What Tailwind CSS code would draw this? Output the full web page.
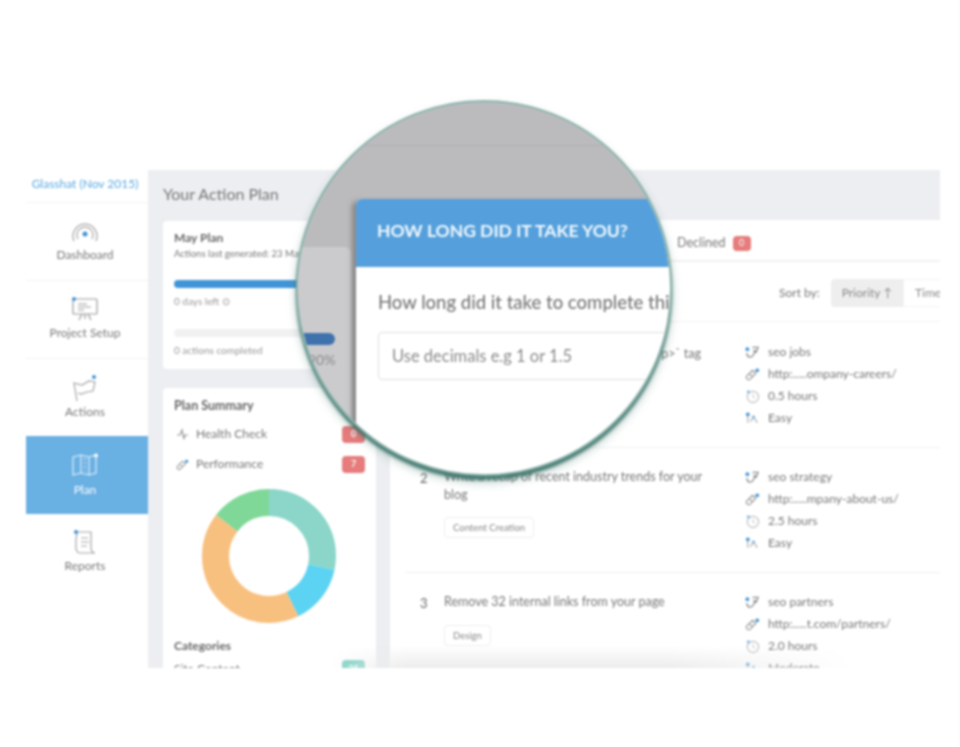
<!DOCTYPE html>
<html lang="en">

<head>
    <meta charset="UTF-8">
    <meta name="viewport" content="width=device-width, initial-scale=1.0">
    <title>Your Action Plan</title>
    <script src="https://cdn.jsdelivr.net/npm/@tailwindcss/browser@4"></script>
</head>

<body class="bg-white font-['Lato','Liberation_Sans',sans-serif]">

    <!-- shared icons for the task rows -->
    <svg width="0" height="0" class="absolute">
        <symbol id="i-key" viewBox="0 0 16 16">
            <path d="M2 9c0 5 5 6 7 2l2-5M8 3h6l-2 5-3-2" fill="none" stroke="#8f8f8f" stroke-width="1.4" />
            <circle cx="2.500" cy="5" r="2" fill="#3f93d6" />
        </symbol>
        <symbol id="i-link" viewBox="0 0 16 16">
            <path d="M2 10l6-6 3.500 3.500-6 6a2.500 2.500 0 0 1-3.500-3.500zM5 8l3 3" fill="none" stroke="#9a9a9a" stroke-width="1.3" />
            <circle cx="13" cy="4" r="2" fill="#3f93d6" />
        </symbol>
        <symbol id="i-clock" viewBox="0 0 16 16">
            <circle cx="8.500" cy="9" r="6" fill="none" stroke="#bdbdbd" stroke-width="1.2" />
            <path d="M8.500 6v3l2 1.500" fill="none" stroke="#bdbdbd" stroke-width="1" />
            <circle cx="3.500" cy="3.500" r="1.500" fill="#6db1e3" />
        </symbol>
        <symbol id="i-level" viewBox="0 0 16 16">
            <path d="M3 13V4M6 12l3-6 4 7" fill="none" stroke="#a9a9a9" stroke-width="1.2" />
            <circle cx="3" cy="4" r="2" fill="#3f93d6" />
            <circle cx="9" cy="7" r="1.500" fill="#6db1e3" />
        </symbol>
    </svg>

    <div class="relative w-[959px] h-[747px] pt-[170px] pl-[26px] border-r border-[#f8f8f8] overflow-hidden blur-[1px]">
        <div class="flex w-[914px] h-[498px] overflow-hidden">

            <!-- sidebar -->
            <aside class="w-[122px] shrink-0 text-center text-[12px] text-[#777]">
                <div class="h-[33px] pt-[5px] pr-[4px] border-b border-[#f3f3f3] text-[12px] text-[#5aa9e2] whitespace-nowrap">Glasshat (Nov 2015)</div>
                <a class="flex flex-col items-center h-[78px] pt-[17px] pr-[4px] border-b border-[#f3f3f3]">
                    <svg class="w-[28px] h-[24px]" viewBox="0 0 28 24" fill="none" stroke="#a5a5a5" stroke-width="1.2">
                        <path d="M3 21a12 12 0 1 1 22 0M7 19a8 8 0 1 1 14 0" />
                        <circle cx="14" cy="14" r="2.500" fill="#3f93d6" stroke="none" />
                    </svg>
                    <span class="mt-[2px]">Dashboard</span>
                </a>
                <a class="flex flex-col items-center h-[78px] pt-[15px] pr-[4px] border-b border-[#f3f3f3]">
                    <svg class="w-[28px] h-[26px]" viewBox="0 0 28 26" fill="none" stroke="#9a9a9a" stroke-width="1.2">
                        <rect x="2" y="3" width="24" height="15" rx="1" />
                        <path d="M7 8h9M7 11h13M7 14h6M11 18l-3 6M17 18l3 6M14 18v5" />
                        <circle cx="3" cy="3" r="2" fill="#3f93d6" stroke="none" />
                    </svg>
                    <span class="mt-[2px]">Project Setup</span>
                </a>
                <a class="flex flex-col items-center h-[77px] pt-[15px] pr-[4px]">
                    <svg class="w-[28px] h-[28px]" viewBox="0 0 28 28" fill="none" stroke="#a5a5a5" stroke-width="1.2">
                        <path d="M6 27L3 9l8 2 7-4 6 1-2 9-6 1-6 2-3-1" />
                        <circle cx="23" cy="3" r="2" fill="#3f93d6" stroke="none" />
                    </svg>
                    <span class="mt-[1px]">Actions</span>
                </a>
                <a class="flex flex-col items-center h-[78px] pt-[17px] pr-[4px] bg-[#69b0e3] text-white">
                    <svg class="w-[28px] h-[24px]" viewBox="0 0 28 24" fill="none" stroke="#e4f1fb" stroke-width="1.2">
                        <path d="M2 4l8-2 8 2 7-2v18l-7 2-8-2-8 2zM10 2v18M18 4v18" />
                        <path d="M14 5v13" stroke-dasharray="2 2" />
                        <circle cx="25" cy="2.500" r="2" fill="#fff" stroke="none" />
                    </svg>
                    <span class="mt-[4px]">Plan</span>
                </a>
                <a class="flex flex-col items-center pt-[15px] pr-[4px]">
                    <svg class="w-[24px] h-[26px]" viewBox="0 0 24 26" fill="none" stroke="#a5a5a5" stroke-width="1.2">
                        <path d="M4 3h14v16c0 3 2 5 4 5H7c-3 0-4-3-4-5V12C3 8 4 6 4 3zM8 9h7M8 13h8M8 17h6" />
                        <circle cx="3" cy="3" r="2" fill="#3f93d6" stroke="none" />
                    </svg>
                    <span class="mt-[2px]">Reports</span>
                </a>
            </aside>

            <!-- main area -->
            <main class="flex-1 bg-[#eceef1]">
                <h1 class="h-[50px] pl-[15px] pt-[15px] text-[16px] leading-[18px] text-[#777]">Your Action Plan</h1>
                <div class="flex h-[448px]">

                    <!-- left column -->
                    <div class="w-[213px] ml-[15px] shrink-0">
                        <section class="h-[148px] mt-[1px] px-[11px] pt-[10px] bg-white rounded text-[#999] text-[10px]">
                            <h2 class="text-[12px] leading-[14px] text-[#666] font-bold">May Plan</h2>
                            <p class="mt-[3px] text-[9.500px] leading-[12px] text-[#777] whitespace-nowrap">Actions last generated: 23 May</p>
                            <div class="w-[180px] h-[8px] mt-[20px] rounded-full bg-[#4195d7]"></div>
                            <p class="mt-[8px] leading-[10px]">0 days left ⊙</p>
                            <div class="w-[180px] h-[8px] mt-[23px] rounded-full bg-[#f1f1f1]"></div>
                            <p class="mt-[8px] leading-[10px]">0 actions completed</p>
                        </section>
                        <section class="h-[280px] mt-[19px] px-[11px] pt-[11px] bg-white rounded-t text-[12px] text-[#777]">
                            <h2 class="text-[12.500px] leading-[14px] text-[#666] font-bold">Plan Summary</h2>
                            <div class="flex items-center h-[18px] mt-[12px]">
                                <svg class="w-[13px] h-[13px] ml-[2px]" viewBox="0 0 13 13" fill="none" stroke="#999" stroke-width="1.2">
                                    <path d="M1 7h3l2-5 2 9 1-4h3" />
                                </svg>
                                <span class="ml-[7px]">Health Check</span>
                                <span class="flex items-center justify-center w-[23px] h-[17px] ml-auto rounded-sm bg-[#e67c7c] text-white text-[9px] font-bold">0</span>
                            </div>
                            <div class="flex items-center h-[18px] mt-[12px]">
                                <svg class="w-[13px] h-[13px] ml-[2px]">
                                    <use href="#i-link" />
                                </svg>
                                <span class="ml-[7px]">Performance</span>
                                <span class="flex items-center justify-center w-[23px] h-[17px] ml-auto rounded-sm bg-[#e67c7c] text-white text-[9px] font-bold">7</span>
                            </div>
                            <svg class="w-[134px] h-[134px] mt-[16px] ml-[28px] -rotate-90" viewBox="0 0 134 134" fill="none" stroke-width="27">
                                <circle cx="67" cy="67" r="53.500" pathLength="360" stroke="#8bd6c9" stroke-dasharray="102 360" />
                                <circle cx="67" cy="67" r="53.500" pathLength="360" stroke="#5cd3f2" stroke-dasharray="52 360" stroke-dashoffset="-102" />
                                <circle cx="67" cy="67" r="53.500" pathLength="360" stroke="#f8c07f" stroke-dasharray="154 360" stroke-dashoffset="-154" />
                                <circle cx="67" cy="67" r="53.500" pathLength="360" stroke="#7fd898" stroke-dasharray="52 360" stroke-dashoffset="-308" />
                            </svg>
                            <h3 class="mt-[16px] leading-[14px] text-[#666] font-bold">Categories</h3>
                            <div class="flex items-start h-[18px] mt-[7px]">
                                <span>Site Content</span>
                                <span class="flex items-center justify-center w-[23px] h-[17px] ml-auto rounded-sm bg-[#7fd3c6] text-white text-[9px] font-bold">25</span>
                            </div>
                        </section>
                    </div>

                    <!-- task list -->
                    <section class="flex-1 ml-[14px] bg-white text-[12px] text-[#777]">
                        <div class="flex items-center h-[42px] pt-[6px] pl-[287px] border-b-2 border-[#f1f1f1] text-[#777]">
                            <span class="text-[12.500px]">Declined</span>
                            <span class="flex items-center justify-center w-[18px] h-[15px] ml-[7px] rounded-sm bg-[#e67c7c] text-white text-[9px]">0</span>
                        </div>
                        <div class="flex items-center h-[60px] pt-[2px] pl-[389px] border-b border-[#f3f3f3]">
                            <span class="w-[52px]">Sort by:</span>
                            <span class="flex items-center justify-center w-[72px] h-[28px] rounded-l-sm bg-[#eeeeee] text-[#888]">Priority ↑</span>
                            <span class="flex items-center h-[28px] pl-[11px] flex-1 border border-[#f3f3f3] border-r-0 text-[#888]">Time</span>
                        </div>

                        <article class="flex h-[126px] ml-[15px] pt-[22px] border-b border-[#f1f1f1]">
                            <span class="w-[39px]"></span>
                            <p class="w-[301px] leading-[20px] text-right pr-[44px] text-[12.500px]">`&lt;p&gt;` tag</p>
                            <div class="flex flex-col gap-[6px] leading-[16px]">
                                <div class="flex items-center gap-[8px]"><svg class="w-[15px] h-[16px]"><use href="#i-key" /></svg>seo jobs</div>
                                <div class="flex items-center gap-[8px]"><svg class="w-[15px] h-[16px]"><use href="#i-link" /></svg>http:.....ompany-careers/</div>
                                <div class="flex items-center gap-[8px]"><svg class="w-[15px] h-[16px]"><use href="#i-clock" /></svg>0.5 hours</div>
                                <div class="flex items-center gap-[8px]"><svg class="w-[15px] h-[16px]"><use href="#i-level" /></svg>Easy</div>
                            </div>
                        </article>

                        <article class="flex h-[125px] ml-[15px] pt-[21px] border-b border-[#f1f1f1]">
                            <span class="w-[39px] pl-[15px] text-[13px] leading-[18px] text-[#666]">2</span>
                            <div class="w-[301px] pr-[24px] -mt-[1px]">
                                <p class="leading-[18px] text-[12.500px]">Write a recap of recent industry trends for your blog</p>
                                <span class="inline-block mt-[13px] px-[8px] h-[21px] leading-[19px] border border-[#eeeeee] rounded-sm text-[9.500px] text-[#888]">Content Creation</span>
                            </div>
                            <div class="flex flex-col gap-[6px] leading-[16px]">
                                <div class="flex items-center gap-[8px]"><svg class="w-[15px] h-[16px]"><use href="#i-key" /></svg>seo strategy</div>
                                <div class="flex items-center gap-[8px]"><svg class="w-[15px] h-[16px]"><use href="#i-link" /></svg>http:.....mpany-about-us/</div>
                                <div class="flex items-center gap-[8px]"><svg class="w-[15px] h-[16px]"><use href="#i-clock" /></svg>2.5 hours</div>
                                <div class="flex items-center gap-[8px]"><svg class="w-[15px] h-[16px]"><use href="#i-level" /></svg>Easy</div>
                            </div>
                        </article>

                        <article class="flex ml-[15px] pt-[21px]">
                            <span class="w-[39px] pl-[15px] text-[13px] leading-[18px] text-[#666]">3</span>
                            <div class="w-[301px] pr-[24px] -mt-[1px]">
                                <p class="leading-[18px] text-[12.500px]">Remove 32 internal links from your page</p>
                                <span class="inline-block mt-[14px] px-[8px] h-[21px] leading-[19px] border border-[#eeeeee] rounded-sm text-[9.500px] text-[#888]">Design</span>
                            </div>
                            <div class="flex flex-col gap-[6px] leading-[16px]">
                                <div class="flex items-center gap-[8px]"><svg class="w-[15px] h-[16px]"><use href="#i-key" /></svg>seo partners</div>
                                <div class="flex items-center gap-[8px]"><svg class="w-[15px] h-[16px]"><use href="#i-link" /></svg>http:.....t.com/partners/</div>
                                <div class="flex items-center gap-[8px]"><svg class="w-[15px] h-[16px]"><use href="#i-clock" /></svg>2.0 hours</div>
                                <div class="flex items-center gap-[8px]"><svg class="w-[15px] h-[16px]"><use href="#i-level" /></svg>Moderate</div>
                            </div>
                        </article>
                    </section>
                </div>
            </main>
        </div>

        <!-- fade on the bottom edge -->
        <div class="absolute left-[330px] top-[646px] w-[520px] h-[22px] bg-linear-to-b from-white/0 to-[#ececec] [mask-image:linear-gradient(to_right,transparent,black_15%,black_65%,transparent)]"></div>

        <!-- magnifier -->
        <div class="absolute left-[296px] top-[100px] w-[376px] h-[376px] rounded-full border-[2px] border-[#8db5ad] shadow-[0_4px_3px_rgba(60,115,105,0.9),0_6px_10px_rgba(60,115,105,0.35)] overflow-hidden bg-[#bbbbbd]">
            <div class="absolute left-0 right-0 top-[43px] h-px bg-[#b0b0b2]"></div>
            <div class="absolute left-[-60px] top-[145px] w-[113px] h-[300px] rounded-md bg-[#cbcbcd]">
                <div class="absolute left-0 top-[86px] w-[97px] h-[12px] rounded-full bg-[#3f72ad]"></div>
                <div class="absolute left-[70px] top-[103px] text-[14px] leading-[20px] text-[#8a8a8a]">90%</div>
            </div>
            <div class="absolute left-[58px] top-[97px] w-[400px] h-[300px] rounded-t-md bg-white shadow-[-4px_2px_5px_rgba(90,90,90,0.55)]">
                <div class="h-[68px] pl-[21px] rounded-t-md bg-[#55a0dc] text-[17.500px] leading-[64px] font-bold text-[#f2f8fd] whitespace-nowrap">HOW LONG DID IT TAKE YOU?</div>
                <p class="mt-[24px] pl-[22px] text-[18.500px] leading-[22px] font-medium text-[#777] whitespace-nowrap">How long did it take to complete this</p>
                <div class="ml-[22px] mt-[19px] h-[48px] pl-[13px] border border-[#dfdfdf] rounded text-[16.500px] leading-[47px] text-[#8a8a8a]">Use decimals e.g 1 or 1.5</div>
            </div>
        </div>
    </div>

</body>

</html>
